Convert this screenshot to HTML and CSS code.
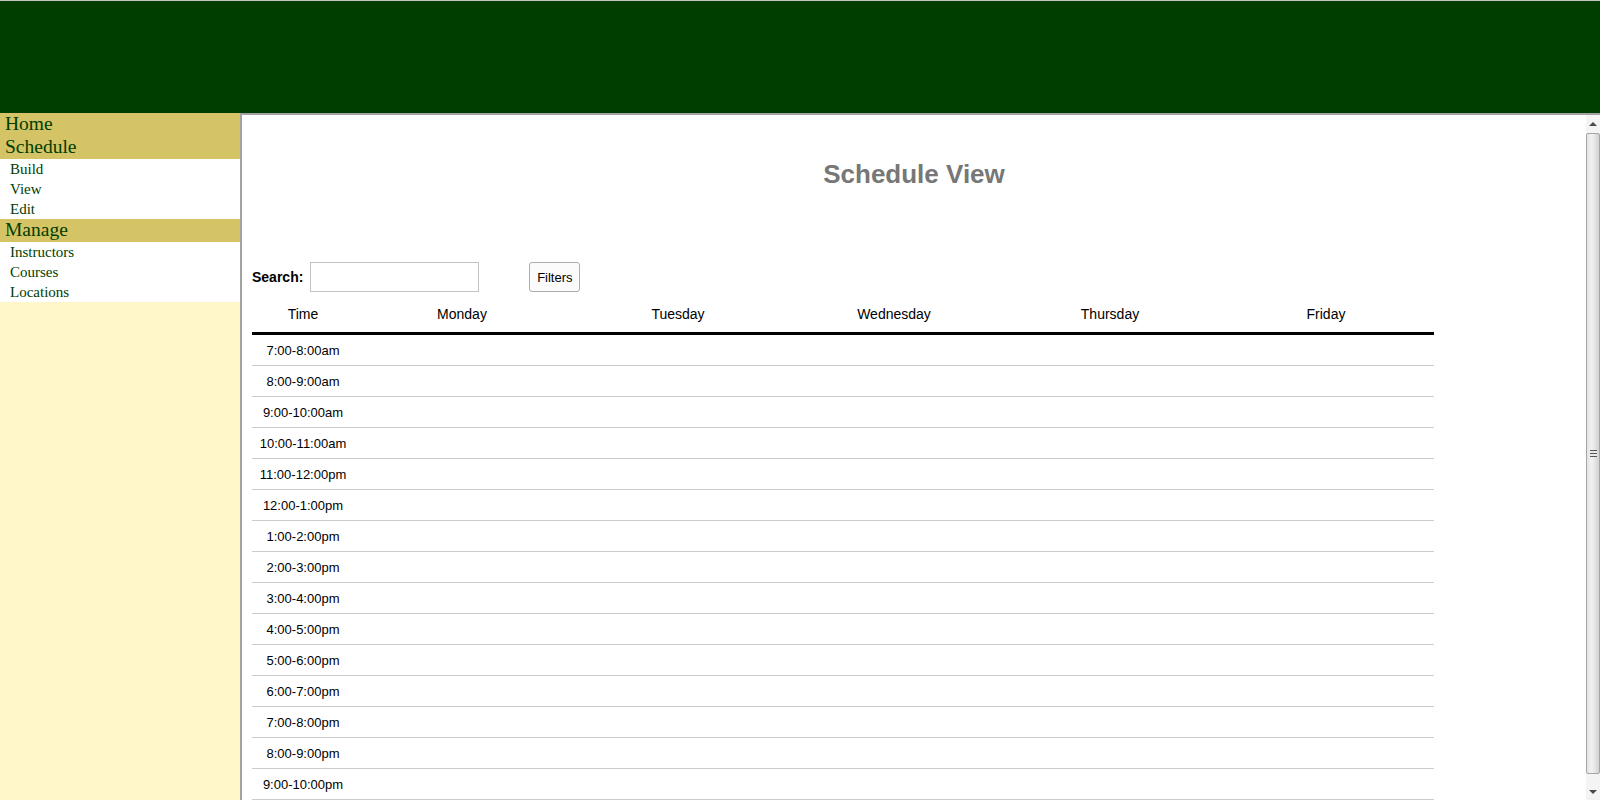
FILE: index.html
```html
<!DOCTYPE html>
<html lang="en">
<head>
<meta charset="utf-8">
<title>Schedule View</title>
<link rel="stylesheet" href="styles.css">
</head>
<body>
<header class="banner"></header>
<div class="layout">
  <nav class="sidebar">
    <div class="nav-head">Home</div>
    <div class="nav-head">Schedule</div>
    <div class="nav-group">
      <div class="nav-item">Build</div>
      <div class="nav-item">View</div>
      <div class="nav-item">Edit</div>
    </div>
    <div class="nav-head">Manage</div>
    <div class="nav-group">
      <div class="nav-item">Instructors</div>
      <div class="nav-item">Courses</div>
      <div class="nav-item">Locations</div>
    </div>
  </nav>
  <main class="frame">
    <div class="content">
      <h1 class="title">Schedule View</h1>
      <div class="toolbar">
        <label class="search-label" for="q">Search:</label>
        <input class="search-input" id="q" type="text">
        <button class="filters-btn" type="button">Filters</button>
      </div>
      <div class="schedule">
        <div class="sched-row sched-head">
          <div>Time</div><div>Monday</div><div>Tuesday</div><div>Wednesday</div><div>Thursday</div><div>Friday</div>
        </div>
        <div class="sched-row"><div>7:00-8:00am</div><div></div><div></div><div></div><div></div><div></div></div>
        <div class="sched-row"><div>8:00-9:00am</div><div></div><div></div><div></div><div></div><div></div></div>
        <div class="sched-row"><div>9:00-10:00am</div><div></div><div></div><div></div><div></div><div></div></div>
        <div class="sched-row"><div>10:00-11:00am</div><div></div><div></div><div></div><div></div><div></div></div>
        <div class="sched-row"><div>11:00-12:00pm</div><div></div><div></div><div></div><div></div><div></div></div>
        <div class="sched-row"><div>12:00-1:00pm</div><div></div><div></div><div></div><div></div><div></div></div>
        <div class="sched-row"><div>1:00-2:00pm</div><div></div><div></div><div></div><div></div><div></div></div>
        <div class="sched-row"><div>2:00-3:00pm</div><div></div><div></div><div></div><div></div><div></div></div>
        <div class="sched-row"><div>3:00-4:00pm</div><div></div><div></div><div></div><div></div><div></div></div>
        <div class="sched-row"><div>4:00-5:00pm</div><div></div><div></div><div></div><div></div><div></div></div>
        <div class="sched-row"><div>5:00-6:00pm</div><div></div><div></div><div></div><div></div><div></div></div>
        <div class="sched-row"><div>6:00-7:00pm</div><div></div><div></div><div></div><div></div><div></div></div>
        <div class="sched-row"><div>7:00-8:00pm</div><div></div><div></div><div></div><div></div><div></div></div>
        <div class="sched-row"><div>8:00-9:00pm</div><div></div><div></div><div></div><div></div><div></div></div>
        <div class="sched-row"><div>9:00-10:00pm</div><div></div><div></div><div></div><div></div><div></div></div>
      </div>
    </div>
    <div class="scrollbar" aria-hidden="true">
      <div class="sb-btn sb-up"><span class="arrow-up"></span></div>
      <div class="sb-thumb"><span class="grip"></span></div>
      <div class="sb-btn sb-down"><span class="arrow-down"></span></div>
    </div>
  </main>
</div>
</body>
</html>
```

FILE: styles.css
```css
html, body {
  margin: 0;
  padding: 0;
  height: 800px;
  overflow: hidden;
  background: #ffffff;
}

.banner {
  height: 112px;
  background: #003e00;
  border-top: 1px solid #c4c4c4;
}

.layout {
  display: flex;
  height: 687px;
}

.sidebar {
  width: 240px;
  flex: none;
  background: #fff7c9;
  font-family: "Liberation Serif", "Times New Roman", serif;
  color: #003d00;
}

.nav-head {
  height: 23px;
  line-height: 22px;
  padding-left: 5px;
  font-size: 19.5px;
  background: #d4c466;
}

.nav-group {
  background: #ffffff;
}

.nav-item {
  height: 20px;
  line-height: 21px;
  padding-left: 10px;
  font-size: 15px;
}

.frame {
  flex: 1;
  display: flex;
  border-top: 2px solid #a2a2a2;
  border-left: 2px solid #a2a2a2;
  overflow: hidden;
}

.content {
  flex: 1;
  font-family: "Liberation Sans", Arial, sans-serif;
  color: #000000;
}

.title {
  margin: 44px 0 0 0;
  height: 30px;
  line-height: 30px;
  font-size: 26px;
  font-weight: bold;
  color: #777777;
  text-align: center;
}

.toolbar {
  display: flex;
  align-items: center;
  margin-top: 73px;
  padding-left: 10px;
  height: 30px;
}

.search-label {
  font-size: 14px;
  font-weight: bold;
  margin-right: 7px;
}

.search-input {
  box-sizing: border-box;
  width: 169px;
  height: 30px;
  margin: 0;
  border: 1px solid #c3c3c3;
  padding: 2px 4px;
  font-family: "Liberation Sans", Arial, sans-serif;
}

.filters-btn {
  box-sizing: border-box;
  margin: 0 0 0 50px;
  width: 51px;
  height: 30px;
  padding: 0;
  border: 1px solid #adadad;
  border-radius: 3px;
  background: #fbfbfb;
  font-family: "Liberation Sans", Arial, sans-serif;
  font-size: 13px;
  color: #000000;
}

.schedule {
  margin-top: 4px;
  margin-left: 10px;
  width: 1182px;
}

.sched-row {
  display: grid;
  grid-template-columns: 102px repeat(5, 216px);
  box-sizing: border-box;
  height: 31px;
  border-bottom: 1px solid #cccccc;
  font-size: 13px;
  align-items: center;
  text-align: center;
  white-space: nowrap;
}

.sched-head {
  height: 39px;
  border-bottom: 3px solid #000000;
  font-size: 14px;
}

.scrollbar {
  width: 14px;
  flex: none;
  display: flex;
  flex-direction: column;
  background: #f0f0f0;
}

.sb-btn {
  flex: none;
  display: flex;
  justify-content: center;
  background: #f4f4f4;
}

.sb-up {
  height: 18px;
  align-items: center;
}

.sb-down {
  height: 26px;
  align-items: flex-end;
  padding-bottom: 6px;
  box-sizing: border-box;
}

.arrow-up {
  width: 0;
  height: 0;
  border-left: 4px solid transparent;
  border-right: 4px solid transparent;
  border-bottom: 4px solid #4a4a4a;
}

.arrow-down {
  width: 0;
  height: 0;
  border-left: 4px solid transparent;
  border-right: 4px solid transparent;
  border-top: 4px solid #4a4a4a;
}

.sb-thumb {
  flex: 1;
  display: flex;
  align-items: center;
  justify-content: center;
  border: 1px solid #a5a5a5;
  border-radius: 2px;
  background: linear-gradient(to right, #e4e4e4, #f2f2f2 40%, #d2d2d2);
}

.grip {
  width: 7px;
  height: 7px;
  background: repeating-linear-gradient(to bottom, #555555 0, #555555 1px, #e8e8e8 1px, #e8e8e8 3px);
}
```
